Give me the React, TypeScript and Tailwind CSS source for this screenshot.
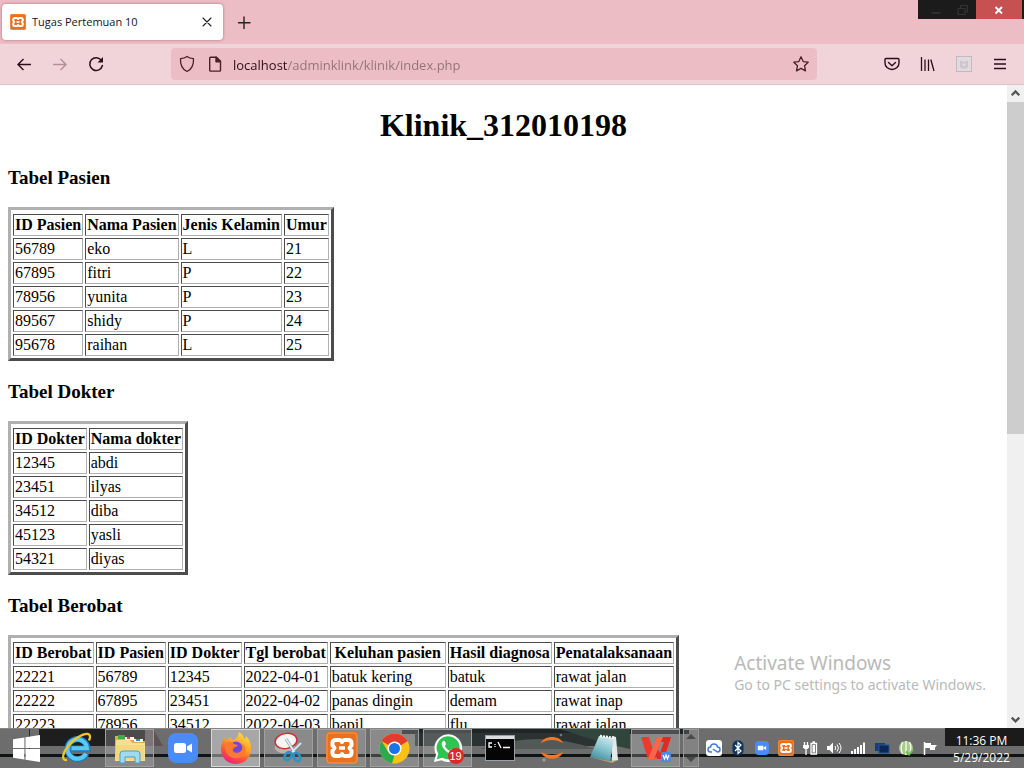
import type { ReactNode } from "react";

const pasien = {
  head: ["ID Pasien", "Nama Pasien", "Jenis Kelamin", "Umur"],
  rows: [
    ["56789", "eko", "L", "21"],
    ["67895", "fitri", "P", "22"],
    ["78956", "yunita", "P", "23"],
    ["89567", "shidy", "P", "24"],
    ["95678", "raihan", "L", "25"],
  ],
};

const dokter = {
  head: ["ID Dokter", "Nama dokter"],
  rows: [
    ["12345", "abdi"],
    ["23451", "ilyas"],
    ["34512", "diba"],
    ["45123", "yasli"],
    ["54321", "diyas"],
  ],
};

const berobat = {
  head: ["ID Berobat", "ID Pasien", "ID Dokter", "Tgl berobat", "Keluhan pasien", "Hasil diagnosa", "Penatalaksanaan"],
  rows: [
    ["22221", "56789", "12345", "2022-04-01", "batuk kering", "batuk", "rawat jalan"],
    ["22222", "67895", "23451", "2022-04-02", "panas dingin", "demam", "rawat inap"],
    ["22223", "78956", "34512", "2022-04-03", "bapil", "flu", "rawat jalan"],
  ],
};

function DataTable({ title, head, rows }: { title: string; head: string[]; rows: string[][] }) {
  const cell =
    "border border-t-[#4c4c4c] border-l-[#4c4c4c] border-b-[#b0b0b0] border-r-[#b0b0b0] p-px whitespace-nowrap";
  return (
    <section className="pt-5 first-of-type:pt-0">
      <h3 className="mb-[18px] text-[19px] leading-[22px] font-bold">{title}</h3>
      <table
        aria-label={title}
        className="border-separate border-spacing-[2px] border-[3px] border-t-[#b0b0b0] border-l-[#b0b0b0] border-b-[#4c4c4c] border-r-[#4c4c4c] pt-[2px] text-base leading-[18px]"
      >
        <thead>
          <tr>
            {head.map((h) => (
              <th key={h} className={`${cell} h-[22px] text-center font-bold ${h === "Keluhan pasien" ? "min-w-[116px]" : ""}`}>{h}</th>
            ))}
          </tr>
        </thead>
        <tbody>
          {rows.map((r) => (
            <tr key={r[0]}>
              {r.map((c, i) => (
                <td key={i} className={`${cell} h-[22px]`}>{c}</td>
              ))}
            </tr>
          ))}
        </tbody>
      </table>
    </section>
  );
}

function Xampp({ className }: { className: string }) {
  return (
    <svg viewBox="0 0 32 32" className={className} aria-hidden="true">
      <rect width="32" height="32" rx="4" fill="#e9701f" />
      <rect x="1" y="1" width="30" height="30" rx="3" fill="none" stroke="#f39a58" strokeWidth="1" />
      <path
        d="M10 8h3.500q1.500 0 2.500 2 1-2 2.500-2H22q3.500 0 3.500 3v2.500L23.500 16l2 2.500V21q0 3-3.500 3h-3.500q-1.500 0-2.500-2-1 2-2.500 2H10q-3.500 0-3.500-3v-2.500l2-2.500-2-2.500V11q0-3 3.500-3z"
        fill="none"
        stroke="#fff"
        strokeWidth="4"
        strokeLinejoin="round"
      />
      <path d="M13 16h6" stroke="#fff" strokeWidth="3.500" />
    </svg>
  );
}

function Line({ children, className = "size-[18px]" }: { children: ReactNode; className?: string }) {
  return (
    <svg
      viewBox="0 0 18 18"
      className={className}
      fill="none"
      stroke="currentColor"
      strokeWidth="1.500"
      strokeLinecap="round"
      strokeLinejoin="round"
      aria-hidden="true"
    >
      {children}
    </svg>
  );
}

function ToolButton({ label, children, dim }: { label: string; children: ReactNode; dim?: boolean }) {
  return (
    <button
      type="button"
      aria-label={label}
      className={`flex h-8 w-9 shrink-0 items-center justify-center ${dim ? "text-[#b38f98]" : "text-[#2b0f18]"}`}
    >
      {children}
    </button>
  );
}

function TabStrip() {
  return (
    <header className="flex h-11 shrink-0 items-start bg-[#ecbdc4] font-['Open_Sans',sans-serif]">
      <div className="mt-1 ml-[2px] flex h-9 w-[221px] items-center rounded-[4px] bg-white pr-[7px] pl-2 shadow-[0_0_3px_rgba(90,40,50,0.5)]">
        <Xampp className="size-4" />
        <span className="ml-[6px] flex-1 text-[11px] text-[#15141a]">Tugas Pertemuan 10</span>
        <button type="button" aria-label="Close tab" className="flex size-[18px] items-center justify-center text-[#222]">
          <Line><path d="M5 5l8 8M13 5l-8 8" strokeWidth="1.100" /></Line>
        </button>
      </div>
      <button type="button" aria-label="New tab" className="mt-[14px] ml-3 flex size-[18px] items-center justify-center text-[#222]">
        <Line><path d="M9 3v11.500M3.500 8.700h11.500" strokeWidth="1.400" /></Line>
      </button>
      <div className="ml-auto flex h-[19px] border-r-2 border-[#1b1b1b] bg-[#1b1b1b]">
        <button type="button" aria-label="Minimize" className="flex w-8 items-center justify-center pl-1 text-[#343434]">
          <Line><path d="M5 12h8" /></Line>
        </button>
        <button type="button" aria-label="Restore" className="flex w-[26px] items-center justify-center text-[#343434]">
          <Line><path d="M4 7.500h7v6H4zM6.500 7V4.500h7V11h-2" strokeWidth="1.200" /></Line>
        </button>
        <button type="button" aria-label="Close" className="flex w-[46px] items-center justify-center bg-[#c75050] text-white">
          <Line><path d="M5.500 6l6.500 6.500M12 6l-6.500 6.500" strokeWidth="1.900" strokeLinecap="butt" /></Line>
        </button>
      </div>
    </header>
  );
}

function Toolbar() {
  return (
    <nav className="flex h-[41px] shrink-0 items-center border-b border-[#ddc3c8] bg-[#f0d4da] px-[6px]">
      <ToolButton label="Back"><Line><path d="M16 9.500H3M8.500 4L3 9.500l5.500 5.500" strokeWidth="1.400" strokeLinecap="butt" strokeLinejoin="miter" /></Line></ToolButton>
      <ToolButton label="Forward" dim><Line><path d="M2 9.500H15M9.500 4L15 9.500l-5.500 5.500" strokeWidth="1.400" strokeLinecap="butt" strokeLinejoin="miter" /></Line></ToolButton>
      <ToolButton label="Reload">
        <Line>
          <path d="M14.500 5.500A6.400 6.400 0 1 0 15.400 10.500" />
          <path d="M16 2v5.500h-5.500z" fill="currentColor" stroke="none" />
        </Line>
      </ToolButton>
      <div className="mx-[57px] flex h-8 min-w-0 flex-1 items-center rounded-[4px] bg-[#ecbdc4] px-[7px] text-[#4a2029]">
        <Line><path d="M9 1.500c1.500 1.200 3.800 2 6.500 2.200.3 5.500-1.400 10.300-6.500 12.800C3.900 14 2.200 9.200 2.500 3.700 5.200 3.500 7.500 2.700 9 1.500z" strokeWidth="1.300" /></Line>
        <svg viewBox="0 0 18 18" className="ml-[10px] size-[18px]" fill="none" stroke="currentColor" strokeWidth="1.400" strokeLinejoin="round" aria-hidden="true">
          <path d="M4.500 2.300h6l4 4v9a.8.800 0 0 1-.8.800H4.500a.8.800 0 0 1-.8-.8V3.100a.8.800 0 0 1 .8-.8z" />
          <path d="M10 2.300v4.500h4.500z" fill="currentColor" />
        </svg>
        <input
          type="text"
          aria-label="Address"
          defaultValue="localhost/adminklink/klinik/index.php"
          className="mt-[3px] ml-[9px] min-w-0 flex-1 bg-[linear-gradient(to_right,#2b0f18_54px,#92727a_54px)] bg-clip-text font-['Open_Sans',sans-serif] text-[13px] text-transparent outline-none"
        />
        <button type="button" aria-label="Bookmark this page" className="flex size-[18px] items-center justify-center">
          <Line><path d="M9 1.800l2.200 4.800 5 .6-3.700 3.500 1 5.200L9 13.400l-4.500 2.500 1-5.200L1.800 7.200l5-.6z" strokeWidth="1.300" /></Line>
        </button>
      </div>
      <ToolButton label="Save to Pocket">
        <Line><path d="M3 3.500h12c.6 0 1 .4 1 1V8a7 6.500 0 0 1-14 0V4.500c0-.6.4-1 1-1zM5.500 7.500L9 10.700l3.500-3.200" strokeWidth="1.400" /></Line>
      </ToolButton>
      <ToolButton label="Library">
        <Line><path d="M2.500 2v14M6 4.500V16M9.500 4.500V16M11.800 4.500L15 16" strokeWidth="1.300" strokeLinecap="butt" /></Line>
      </ToolButton>
      <ToolButton label="Extension">
        <svg viewBox="0 0 18 18" className="size-[18px]" fill="none" aria-hidden="true">
          <rect x="1.500" y="1.500" width="15" height="15" fill="#e2dade" stroke="#bdbdc0" />
          <path d="M5 5l2 1.500h4L13 5v7l-2 1.500H7L5 12z" fill="#ccc8ca" />
          <path d="M7.500 8.500h3v2.500h-3z" fill="#e2dade" />
        </svg>
      </ToolButton>
      <ToolButton label="Open menu"><Line><path d="M3 4.500h12M3 9h12M3 13.500h12" strokeWidth="1.300" strokeLinecap="butt" /></Line></ToolButton>
    </nav>
  );
}

function Scrollbar() {
  return (
    <div className="flex w-[17px] shrink-0 flex-col bg-[#f0f0f0] text-[#555]">
      <button type="button" aria-label="Scroll up" className="flex h-[17px] items-center justify-center">
        <Line className="size-[17px]"><path d="M5 10.800l4-4 4 4" strokeWidth="2.400" strokeLinecap="butt" strokeLinejoin="miter" /></Line>
      </button>
      <div className="flex-1">
        <div className="h-[54.500%] bg-[#cdcdcd]" />
      </div>
      <button type="button" aria-label="Scroll down" className="flex h-[17px] items-center justify-center">
        <Line className="size-[17px]"><path d="M5 7l4 4 4-4" strokeWidth="2.400" strokeLinecap="butt" strokeLinejoin="miter" /></Line>
      </button>
    </div>
  );
}

function TaskButton({ label, open, active, children }: { label: string; open?: boolean; active?: boolean; children: ReactNode }) {
  const look = active
    ? "border-[#d8d8d8] bg-white/40"
    : open
      ? "border-[#a0a0a0] bg-white/20"
      : "border-transparent";
  return (
    <button type="button" aria-label={label} className={`flex h-[38px] w-[49px] shrink-0 items-center justify-center border ${look}`}>
      {children}
    </button>
  );
}

function Camera({ className }: { className: string }) {
  return (
    <svg viewBox="0 0 30 30" className={className} aria-hidden="true">
      <rect width="30" height="30" rx="8" fill="#4a8cf7" />
      <rect x="6" y="10" width="12" height="10" rx="2.500" fill="#fff" />
      <path d="M19 13.500l5-3v9l-5-3z" fill="#fff" />
    </svg>
  );
}

function TaskbarBackdrop() {
  return (
    <svg className="absolute inset-0 size-full" viewBox="0 0 1024 40" preserveAspectRatio="none" aria-hidden="true">
      <rect width="1024" height="40" fill="#6d6d6d" />
      <rect width="1024" height="1" fill="#858585" />
      <rect x="39" y="1" width="106" height="17" fill="#1e1e1e" />
      <path d="M145 1h8l10 17h-18z" fill="#5d5254" />
      <rect x="29" y="1" width="1" height="28" fill="#20302f" />
      <rect x="402" y="1" width="287" height="5" fill="#1f2424" />
      <rect x="415" y="5" width="215" height="13" fill="#2b3232" />
      <path d="M480 21q60-20 115 0z" fill="#535956" />
      <path d="M560 1h70v20q-30-6-70-20z" fill="#30453c" />
      <rect y="26" width="1024" height="3" fill="#0d1413" />
      <rect x="945" width="79" height="18" fill="#1b1b1b" />
    </svg>
  );
}

function Taskbar() {
  return (
    <footer className="relative h-10 shrink-0 overflow-hidden">
      <TaskbarBackdrop />
      <div className="relative flex h-full items-center">
        <button type="button" aria-label="Start" className="flex w-[52px] shrink-0 justify-center">
          <svg viewBox="0 0 26 26" className="size-[27px]" fill="#fff" aria-hidden="true">
            <path d="M0 4l11-1.700V12.500H0zM12 2.100L26 0v12.500H12zM0 13.500h11v10.200L0 22zM12 13.500h14V26l-14-2.100z" />
          </svg>
        </button>
        <div className="flex shrink-0 items-center gap-1">
          <TaskButton label="Internet Explorer">
            <svg viewBox="0 0 32 32" className="size-8" fill="none" aria-hidden="true">
              <path d="M25.500 21.500A10 10 0 1 1 26.500 16.500H10.500" stroke="#1b7dc4" strokeWidth="6" />
              <path d="M25 21.500A9.700 9.700 0 1 1 26 16.300H10.500" stroke="#5bc8f2" strokeWidth="4" />
              <path d="M6 28C-1 29 2 19 10 11S28-1 29 4c.3 1.500-.3 3-1 4.500" stroke="#f3c52b" strokeWidth="2.300" />
            </svg>
          </TaskButton>
          <TaskButton label="File Explorer" open>
            <svg viewBox="0 0 32 32" className="size-8" aria-hidden="true">
              <path d="M1 4h8l2 2h9l2 3h9v20H1z" fill="#d9ae4c" />
              <path d="M4 3h7v4H4z" fill="#45a84c" />
              <path d="M11 5h9v3h-9z" fill="#f8f8f8" /><path d="M13 5h3v2h-3z" fill="#d54b35" />
              <path d="M20 7h9v3h-9z" fill="#f4f7fa" /><path d="M22 7h4v2h-4z" fill="#3c85c8" />
              <path d="M2 8h14l2 3h13v18H1z" fill="#f8df93" />
              <path d="M2 13h28v15H2z" fill="#f4d77f" />
              <path d="M6 31V22q0-3 3-3h14q3 0 3 3v9h-5v-6H11v6z" fill="#9edbf3" stroke="#4a9fcc" />
            </svg>
          </TaskButton>
          <TaskButton label="Zoom"><Camera className="size-[30px]" /></TaskButton>
          <TaskButton label="Firefox" active>
            <svg viewBox="0 0 32 32" className="size-8" aria-hidden="true">
              <defs>
                <linearGradient id="fox" x1="0.800" y1="0" x2="0.300" y2="1">
                  <stop offset="0" stopColor="#ffe14a" /><stop offset="0.450" stopColor="#ff9a26" /><stop offset="0.750" stopColor="#ff4b3e" /><stop offset="1" stopColor="#e92080" />
                </linearGradient>
              </defs>
              <path d="M19 0c3 2 5 4 5 7 2-1 2-2 2-3 4 4 5 8 5 13 0 9-7 15-15 15S1 26 1 17C1 12 3 8 5 5l1 4c2-2 3-3 5-4l1 3c3 0 6-3 7-8z" fill="url(#fox)" />
              <circle cx="16" cy="16" r="6.500" fill="#7446d6" />
              <path d="M5 12c3-3 6-3 9 0l4 1c-1 2-4 2-5 4-1 4 5 5 8 2 2-2 2-5 0-8 5 2 6 9 2 13-6 5-16 2-18-7z" fill="#ff7a2c" />
            </svg>
          </TaskButton>
          <TaskButton label="Snipping Tool" open>
            <svg viewBox="0 0 32 32" className="size-8" fill="none" aria-hidden="true">
              <ellipse cx="12" cy="14" rx="10.500" ry="7" fill="#b5b5b5" transform="rotate(-10 12 14)" />
              <ellipse cx="13" cy="9" rx="11" ry="7.500" fill="#f6f4f4" stroke="#c92f35" strokeWidth="1.500" transform="rotate(-10 13 9)" />
              <path d="M13 7l9 14M28 11l-10 10" stroke="#8fa3ad" strokeWidth="3" />
              <path d="M13 7l9 14M28 11l-10 10" stroke="#e6edf0" strokeWidth="1.500" />
              <ellipse cx="15" cy="24" rx="3" ry="4.500" stroke="#2c93c9" strokeWidth="2.500" transform="rotate(35 15 24)" />
              <ellipse cx="24" cy="25" rx="3" ry="4.500" stroke="#2c93c9" strokeWidth="2.500" transform="rotate(-25 24 25)" />
            </svg>
          </TaskButton>
          <TaskButton label="XAMPP" open><Xampp className="size-8" /></TaskButton>
          <div className="flex w-[49px] items-center">
            <TaskButton label="Chrome" open>
              <svg viewBox="0 0 32 32" className="size-[31px]" aria-hidden="true">
                <circle cx="16" cy="16" r="15.500" fill="#fbc116" />
                <path d="M16 16L2.600 8.200A15.500 15.500 0 0 1 29.400 8.200z" fill="#e33b2e" />
                <path d="M2.600 8.200L9.900 20 16 23l-2.500 8.300A15.500 15.500 0 0 1 2.600 8.200z" fill="#2da94f" />
                <path d="M9.500 8.200h20L22 13z" fill="#e33b2e" />
                <circle cx="16" cy="16" r="7.300" fill="#fff" />
                <circle cx="16" cy="16" r="5.700" fill="#1a73e8" />
              </svg>
            </TaskButton>
          </div>
        </div>
        <div className="ml-1 flex shrink-0 items-center gap-[3px]">
          <TaskButton label="WhatsApp" open>
            <span className="relative block">
              <svg viewBox="0 0 32 32" className="size-[30px]" aria-hidden="true">
                <path d="M1 31l2.200-8A14.800 14.800 0 1 1 9 29z" fill="#fff" />
                <path d="M4 28l1.600-5.800A12.300 12.300 0 1 1 10 26.500z" fill="#2fc351" />
                <path d="M11 8.500c-3 2-2 5.500 2 10s8.500 5 10 2.500c.8-1.500.3-2-.5-2.500l-2.500-1.300c-1-.4-1.500 1.800-2.500 1.500-2-.8-4-2.800-4.700-4.700-.3-.9 1.500-1.200 1-2.500l-1.200-2.700c-.4-.8-1-.8-1.600-.3z" fill="#fff" />
              </svg>
              <span className="absolute -right-[1px] -bottom-[1px] flex size-4 items-center justify-center rounded-full bg-[#e2262b] font-['Liberation_Sans',sans-serif] text-[11px] leading-none text-white">19</span>
            </span>
          </TaskButton>
          <TaskButton label="Command Prompt">
            <svg viewBox="0 0 30 26" className="h-[26px] w-[30px]" aria-hidden="true">
              <rect x="0.500" y="0.500" width="29" height="25" fill="#050505" stroke="#9aa0a5" />
              <rect x="1" y="1" width="28" height="3" fill="#d9dde0" />
              <path d="M7 8H4v4h3M10 9v1M10 11v1M13 7l3 6M18 12.500h7" stroke="#fff" strokeWidth="1.300" fill="none" />
            </svg>
          </TaskButton>
          <TaskButton label="Jupyter">
            <svg viewBox="0 0 32 32" className="size-8" aria-hidden="true">
              <path d="M5 11C8 3 24 3 27 11 20 7 12 7 5 11z" fill="#f37726" />
              <path d="M5 20c3 9 19 9 22 0-7 4-15 4-22 0z" fill="#f37726" />
              <circle cx="25" cy="3" r="1.300" fill="#777" /><circle cx="8" cy="28" r="1.800" fill="#999" />
            </svg>
          </TaskButton>
          <TaskButton label="Notepad">
            <svg viewBox="0 0 32 32" className="size-8" aria-hidden="true">
              <defs>
                <linearGradient id="pad" x1="0.700" y1="0" x2="0.300" y2="1">
                  <stop offset="0" stopColor="#cfe9ec" /><stop offset="0.450" stopColor="#8cc7d0" /><stop offset="1" stopColor="#3f8c9b" />
                </linearGradient>
              </defs>
              <path d="M24 4l4 1 2 23-6 2z" fill="#e4e9ea" />
              <path d="M2 25l20 4 8-1-6 3z" fill="#b6a36b" />
              <path d="M11 4l15 2-4 23L2 25z" fill="url(#pad)" />
              <path d="M12 4l15 2" stroke="#f6f6f6" strokeWidth="2.500" strokeDasharray="2 1" />
            </svg>
          </TaskButton>
          <TaskButton label="WPS Office" open>
            <svg viewBox="0 0 32 32" className="size-8" aria-hidden="true">
              <path d="M1 5h8l4 13 4-13h5l-7 22H8z" fill="#f0382d" />
              <path d="M17 5h14l-7 22h-7l-2-7 2-4 3 5 4-11h-8z" fill="#e52822" />
              <path d="M8 27l9-22h6L14 27z" fill="#ff6547" />
              <rect x="21" y="20" width="10" height="10" rx="1.500" fill="#4c86e8" />
              <path d="M23 23l1.500 4 1.500-4 1.500 4 1.500-4" fill="none" stroke="#fff" strokeWidth="1.200" />
            </svg>
          </TaskButton>
          <button type="button" aria-label="More windows" className="flex h-[38px] w-4 items-center justify-center border border-[#9a9a9a] bg-white/15">
            <svg viewBox="0 0 14 36" className="h-9 w-[14px]" fill="#4a4a4a" aria-hidden="true"><path d="M2 9l5-5 5 5zM2 27l5 5 5-5z" /></svg>
          </button>
        </div>
        <div className="ml-auto flex shrink-0 items-center gap-2">
          <svg viewBox="0 0 16 16" className="size-4" aria-hidden="true"><rect width="16" height="16" rx="3" fill="#fff" /><path d="M6 12H4.500a2.500 2.500 0 0 1 0-5C5 3 11 3 11.500 7a2.500 2.500 0 0 1 0 5L7 9" fill="none" stroke="#3f7de0" strokeWidth="1.500" /></svg>
          <svg viewBox="0 0 16 16" className="size-4" aria-hidden="true"><rect x="2.500" y="0.500" width="11" height="15" rx="5" fill="#10345f" /><path d="M5 5l6 6-3 2.500v-11L11 5l-6 6" fill="none" stroke="#fff" strokeWidth="1.200" /></svg>
          <Camera className="mx-[1px] size-[14px]" />
          <Xampp className="size-4" />
          <svg viewBox="0 0 16 16" className="size-4" aria-hidden="true"><path d="M2.500 2v3M5.500 2v3M4 9v6" stroke="#fff" strokeWidth="1.300" fill="none" /><path d="M1 5h6v2.500L5.500 9h-3L1 7.500z" fill="#fff" /><path d="M9 3.500h5.500v10.500H9zM10.500 2h2.500" fill="none" stroke="#fff" strokeWidth="1.300" /><path d="M10.500 5h2.500v7.500h-2.500z" fill="#fff" /></svg>
          <svg viewBox="0 0 16 16" className="size-4" aria-hidden="true"><path d="M1 6h2.500L7 2.500v11L3.500 10H1z" fill="#fff" /><path d="M9 6q1.500 2 0 4M11 4.500q3 3.500 0 7M13 3q4 5 0 10" stroke="#fff" fill="none" /></svg>
          <svg viewBox="0 0 16 16" className="size-4" fill="#fff" aria-hidden="true"><path d="M1 11h2v3H1zM4 9h2v5H4zM7 7h2v7H7zM10 5h2v9h-2zM13 2.500h2V14h-2z" /></svg>
          <svg viewBox="0 0 16 16" className="size-4" aria-hidden="true"><rect x="1" y="3" width="10" height="8" fill="#163f76" /><rect x="5" y="5" width="10" height="8" fill="#0b2752" stroke="#245796" /></svg>
          <svg viewBox="0 0 16 16" className="size-4" aria-hidden="true"><circle cx="8" cy="8" r="7" fill="#a5c98a" /><path d="M8 1v14M4.500 2q-2.500 6 0 12M11.500 2q2.500 6 0 12" fill="none" stroke="#f4f8f0" strokeWidth="1.400" /><path d="M8 11.500l3 3 4-5" fill="none" stroke="#6fc04d" strokeWidth="2" /></svg>
          <svg viewBox="0 0 16 16" className="size-4" aria-hidden="true"><path d="M2.500 2v13" stroke="#fff" strokeWidth="1.500" /><path d="M3 3h6v2h6l-2 2.500V10H8V8H3z" fill="#fff" /></svg>
          <time className="flex w-[78px] flex-col items-center pt-px pr-[7px] font-['Open_Sans',sans-serif] text-[12px] leading-[17px] text-white">
            <span>11:36 PM</span>
            <span>5/29/2022</span>
          </time>
        </div>
      </div>
    </footer>
  );
}

export default function App() {
  return (
    <div className="flex h-screen flex-col overflow-hidden bg-white">
      <TabStrip />
      <Toolbar />
      <div className="relative flex min-h-0 flex-1">
        <main className="min-w-0 flex-1 overflow-hidden px-2 font-['Liberation_Serif',serif] text-black">
          <h1 className="mt-[22px] mb-6 text-center text-[32px] leading-9 font-bold">Klinik_312010198</h1>
          <DataTable title="Tabel Pasien" {...pasien} />
          <DataTable title="Tabel Dokter" {...dokter} />
          <DataTable title="Tabel Berobat" {...berobat} />
        </main>
        <Scrollbar />
        <div className="pointer-events-none absolute right-[38px] bottom-[33px] font-['Noto_Sans',sans-serif] text-[#b9b9b9]">
          <p className="text-[19px] leading-6">Activate Windows</p>
          <p className="text-[14px] leading-5">Go to PC settings to activate Windows.</p>
        </div>
      </div>
      <Taskbar />
    </div>
  );
}
